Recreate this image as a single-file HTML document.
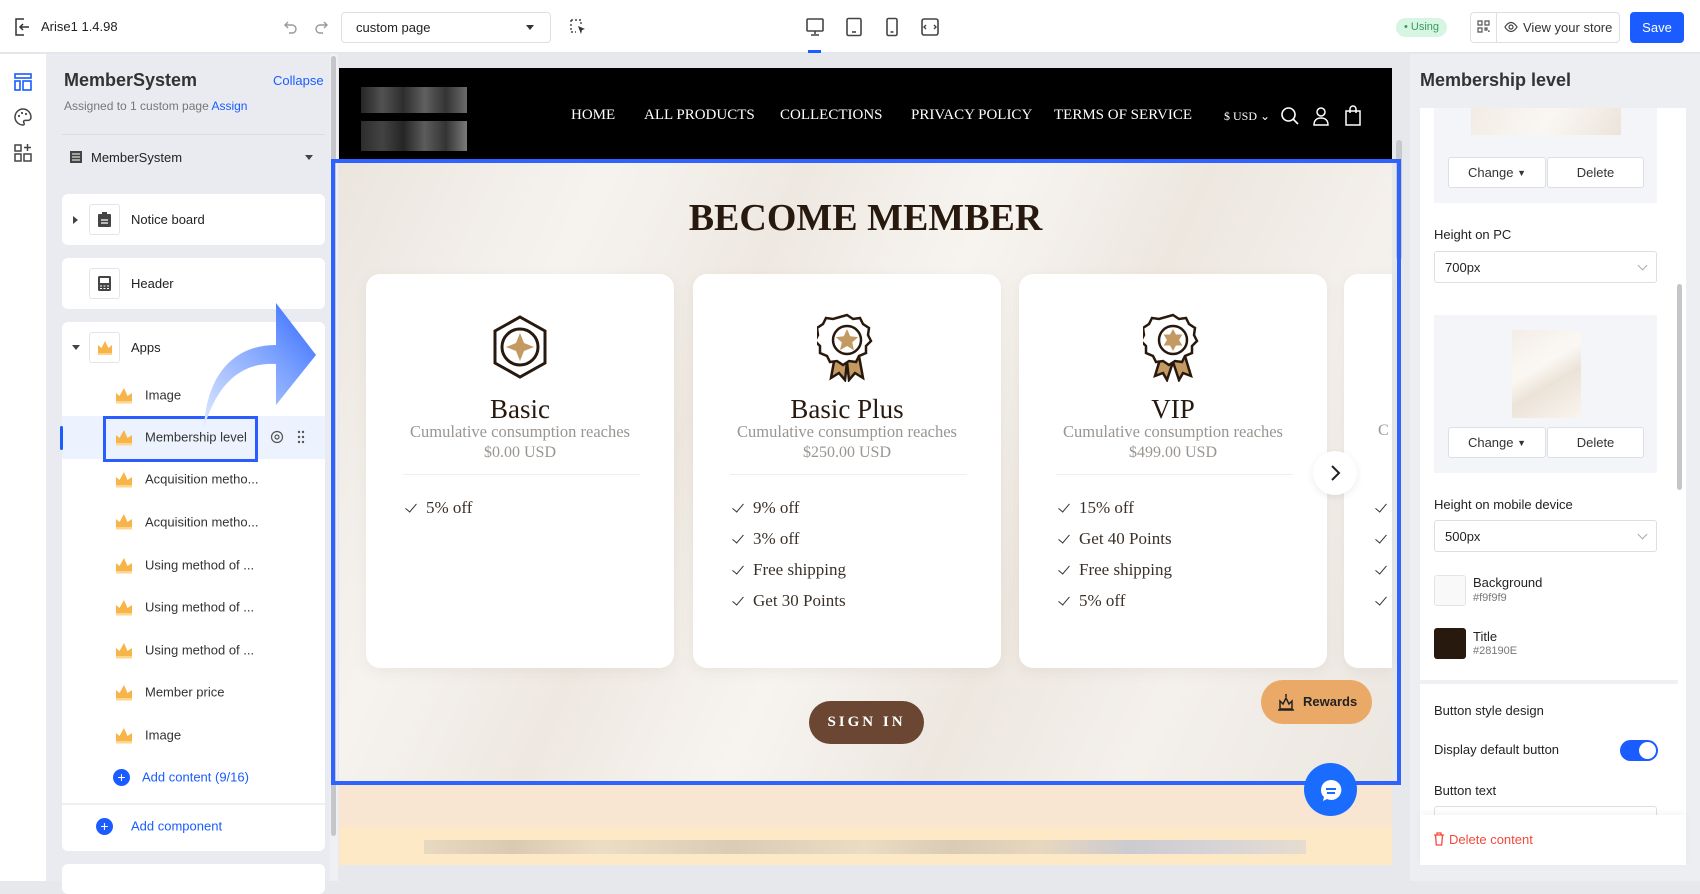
<!DOCTYPE html>
<html><head><meta charset="utf-8"><style>
*{box-sizing:border-box;margin:0;padding:0}
body{width:1700px;height:881px;overflow:hidden;position:relative;font-family:"Liberation Sans",sans-serif;background:#e6e8ec;color:#222}
.a{position:absolute}
.serif{font-family:"Liberation Serif",serif}
.top{left:0;top:0;width:1700px;height:53px;background:#fff;border-bottom:1px solid #e3e5e9}
.t13{font-size:13px}
.card{background:#fff;border-radius:6px}
.lbl{font-size:13px;color:#222}
.ch{position:absolute;left:115px;width:18px;height:18px}
.chtxt{position:absolute;left:145px;font-size:13px;color:#333;transform:translateY(-50%)}
.mc{position:absolute;top:274px;width:308px;height:394px;background:#fff;border-radius:14px;box-shadow:0 4px 14px rgba(120,100,80,.08)}
.mc .nm{position:absolute;top:120px;width:100%;text-align:center;font-size:27px;color:#28190e}
.mc .sb{position:absolute;top:148px;width:100%;text-align:center;font-size:16.5px;color:#9a9590}
.mc .pr{position:absolute;top:170px;width:100%;text-align:center;font-size:16px;color:#9a9590}
.mc .dv{position:absolute;top:200px;left:37px;right:34px;height:1px;background:#eee}
.mc ul{position:absolute;top:224px;left:40px;list-style:none}
.mc li{font-size:17px;color:#3b3129;height:31px;position:relative;padding-left:20px}
.mc li:before{content:"";position:absolute;left:2px;top:3px;width:5px;height:10px;border-right:1.5px solid #3b3129;border-bottom:1.5px solid #3b3129;transform:rotate(40deg)}
.btn2{position:absolute;height:31px;border:1px solid #dcdfe5;background:#fff;font-size:13px;color:#333;display:flex;align-items:center;justify-content:center;border-radius:3px}
.sel{position:absolute;left:1434px;width:223px;height:32px;border:1px solid #dcdfe5;border-radius:3px;background:#fff;font-size:13px;padding:8px 0 0 10px}
.sel:after{content:"";position:absolute;right:10px;top:10px;width:6px;height:6px;border-right:1px solid #aaa;border-bottom:1px solid #aaa;transform:rotate(45deg)}
</style></head><body>

<div class="a top"></div>
<svg class="a" style="left:14px;top:18px" width="16" height="18" viewBox="0 0 16 18"><path d="M10 1H2v16h8M6 9h9M9 6L6 9l3 3" fill="none" stroke="#333" stroke-width="1.5"/></svg>
<div class="a t13" style="left:41px;top:19px;color:#222">Arise1 1.4.98</div>
<svg class="a" style="left:283px;top:19px" width="16" height="16" viewBox="0 0 16 16"><path d="M5 3L2 6l3 3M2 6h7a4 4 0 010 8H6" fill="none" stroke="#999" stroke-width="1.4"/></svg>
<svg class="a" style="left:313px;top:19px" width="16" height="16" viewBox="0 0 16 16"><path d="M11 3l3 3-3 3M14 6H7a4 4 0 000 8h3" fill="none" stroke="#999" stroke-width="1.4"/></svg>
<div class="a" style="left:341px;top:12px;width:210px;height:31px;border:1px solid #dcdfe5;border-radius:4px;font-size:13px;padding:7px 14px">custom page<span style="position:absolute;right:16px;top:12px;border:4px solid transparent;border-top:5px solid #333"></span></div>
<svg class="a" style="left:569px;top:18px" width="18" height="18" viewBox="0 0 18 18"><path d="M2 2h10v5M2 2v12h5" fill="none" stroke="#444" stroke-width="1.4" stroke-dasharray="2 2"/><path d="M9 8l7 3-3 1-1 4z" fill="#333"/></svg>
<svg class="a" style="left:805px;top:17px" width="20" height="20" viewBox="0 0 20 20"><rect x="2" y="2" width="16" height="12" rx="1" fill="none" stroke="#444" stroke-width="1.6"/><path d="M10 14v3M6 18h8" stroke="#444" stroke-width="1.6"/></svg>
<div class="a" style="left:808px;top:50px;width:13px;height:3px;background:#1a5cff"></div>
<svg class="a" style="left:845px;top:17px" width="18" height="20" viewBox="0 0 18 20"><rect x="2" y="1.5" width="14" height="17" rx="1.5" fill="none" stroke="#444" stroke-width="1.6"/><path d="M7 15h4" stroke="#444" stroke-width="1.6"/></svg>
<svg class="a" style="left:885px;top:17px" width="14" height="20" viewBox="0 0 14 20"><rect x="2" y="1.5" width="10" height="17" rx="1.5" fill="none" stroke="#444" stroke-width="1.6"/><path d="M5.5 15h3" stroke="#444" stroke-width="1.6"/></svg>
<svg class="a" style="left:920px;top:17px" width="20" height="20" viewBox="0 0 20 20"><rect x="2" y="2" width="16" height="16" rx="2" fill="none" stroke="#444" stroke-width="1.6"/><path d="M6 8l-2 2 2 2M14 8l2 2-2 2" fill="none" stroke="#444" stroke-width="1.4"/></svg>
<div class="a" style="left:1396px;top:18px;width:51px;height:19px;border-radius:10px;background:#d6f5e2;color:#3a9a5e;font-size:11px;line-height:19px;text-align:center">• Using</div>
<div class="a" style="left:1470px;top:12px;width:150px;height:31px;border:1px solid #dcdfe5;border-radius:4px"></div>
<div class="a" style="left:1496px;top:12px;width:1px;height:31px;background:#dcdfe5"></div>
<svg class="a" style="left:1477px;top:20px" width="13" height="13" viewBox="0 0 13 13"><path d="M1 1h4v4H1zM8 1h4v4H8zM1 8h4v4H1zM8 8h2v2H8zM11 11h1v1" fill="none" stroke="#555" stroke-width="1.2"/></svg>
<svg class="a" style="left:1504px;top:20px" width="14" height="14" viewBox="0 0 14 14"><path d="M1 7s2.5-4.5 6-4.5S13 7 13 7s-2.5 4.5-6 4.5S1 7 1 7z" fill="none" stroke="#444" stroke-width="1.2"/><circle cx="7" cy="7" r="2" fill="none" stroke="#444" stroke-width="1.2"/></svg>
<div class="a t13" style="left:1523px;top:20px;color:#333">View your store</div>
<div class="a" style="left:1630px;top:12px;width:54px;height:31px;background:#1a5cff;border-radius:4px;color:#fff;font-size:13px;line-height:31px;text-align:center">Save</div>

<div class="a" style="left:0;top:54px;width:46px;height:827px;background:#fff"></div>
<svg class="a" style="left:13px;top:72px" width="20" height="20" viewBox="0 0 20 20"><rect x="2" y="2" width="16" height="4" fill="none" stroke="#1a5cff" stroke-width="1.6"/><rect x="2" y="9" width="5" height="9" fill="none" stroke="#1a5cff" stroke-width="1.6"/><rect x="10" y="9" width="8" height="9" fill="none" stroke="#1a5cff" stroke-width="1.6"/></svg>
<svg class="a" style="left:13px;top:107px" width="20" height="20" viewBox="0 0 20 20"><path d="M10 2a8 8 0 100 16c1.5 0 1.5-1.5.8-2.4-.7-.9 0-2.2 1.3-2.2H15a3 3 0 003-3c0-4.5-3.6-8.4-8-8.4z" fill="none" stroke="#444" stroke-width="1.5"/><circle cx="6" cy="9" r="1.1" fill="#444"/><circle cx="9" cy="6" r="1.1" fill="#444"/><circle cx="13" cy="7" r="1.1" fill="#444"/></svg>
<svg class="a" style="left:13px;top:143px" width="20" height="20" viewBox="0 0 20 20"><rect x="2" y="2" width="6" height="6" fill="none" stroke="#444" stroke-width="1.5"/><rect x="2" y="11" width="6" height="7" fill="none" stroke="#444" stroke-width="1.5"/><rect x="11" y="11" width="7" height="7" fill="none" stroke="#444" stroke-width="1.5"/><path d="M14.5 1v7M11 4.5h7" stroke="#444" stroke-width="1.5"/></svg>

<div class="a" style="left:46px;top:54px;width:284px;height:827px;background:#e9ebf0"></div>
<div class="a" style="left:330px;top:54px;width:8px;height:827px;background:#eef0f3"></div>
<div class="a" style="left:331px;top:56px;width:5px;height:780px;background:#c4c6ca;border-radius:3px"></div>
<div class="a" style="left:64px;top:70px;font-size:18px;font-weight:bold;color:#333">MemberSystem</div>
<div class="a" style="left:273px;top:73px;font-size:13px;color:#1a5cff">Collapse</div>
<div class="a" style="left:64px;top:99px;font-size:12px;color:#777">Assigned to 1 custom page <span style="color:#1a5cff">Assign</span></div>
<div class="a" style="left:62px;top:134px;width:263px;height:1px;background:#dadce1"></div>
<svg class="a" style="left:69px;top:150px" width="14" height="14" viewBox="0 0 14 14"><rect x="1" y="1" width="12" height="12" fill="#444"/><path d="M3 4h8M3 7h8M3 10h8" stroke="#fff" stroke-width="1"/></svg>
<div class="a lbl" style="left:91px;top:150px">MemberSystem</div>
<div class="a" style="left:305px;top:155px;border:4px solid transparent;border-top:5px solid #444"></div>

<div class="a card" style="left:62px;top:194px;width:263px;height:51px"></div>
<div class="a" style="left:73px;top:216px;border:4px solid transparent;border-left:5px solid #444"></div>
<div class="a" style="left:89px;top:204px;width:31px;height:31px;border:1px solid #e2e4e8;border-radius:3px"></div>
<svg class="a" style="left:97px;top:211px" width="15" height="17" viewBox="0 0 15 17"><rect x="1" y="3" width="13" height="13" rx="1" fill="#444"/><rect x="5" y="1" width="5" height="3" fill="#444"/><path d="M4 9h7M4 12h7" stroke="#fff" stroke-width="1.2"/></svg>
<div class="a lbl" style="left:131px;top:212px">Notice board</div>

<div class="a card" style="left:62px;top:258px;width:263px;height:51px"></div>
<div class="a" style="left:89px;top:268px;width:31px;height:31px;border:1px solid #e2e4e8;border-radius:3px"></div>
<svg class="a" style="left:97px;top:275px" width="15" height="17" viewBox="0 0 15 17"><rect x="1" y="1" width="13" height="15" rx="1.5" fill="#444"/><rect x="3" y="3" width="9" height="5" fill="#fff"/><path d="M3 11h2M6.5 11h2M10 11h2M3 13.5h2M6.5 13.5h2M10 13.5h2" stroke="#fff" stroke-width="1"/></svg>
<div class="a lbl" style="left:131px;top:276px">Header</div>

<div class="a card" style="left:62px;top:322px;width:263px;height:529px"></div>
<div class="a" style="left:72px;top:345px;border:4px solid transparent;border-top:5px solid #444"></div>
<div class="a" style="left:89px;top:332px;width:31px;height:31px;border:1px solid #e2e4e8;border-radius:3px"></div>
<svg class="a" style="left:96px;top:338px" width="18" height="18" viewBox="0 0 18 18"><path d="M2 7l3.5 3L9 3l3.5 7L16 7v8H2z" fill="#f7b44a"/><rect x="2" y="15" width="14" height="2" fill="#fbd38a"/></svg>
<div class="a lbl" style="left:131px;top:340px">Apps</div>
<div class="a" style="left:62px;top:416px;width:263px;height:43px;background:#edf3fe"></div>
<div class="a" style="left:60px;top:426px;width:3px;height:24px;background:#1a5cff;border-radius:2px"></div>

<svg width="0" height="0" style="position:absolute"><defs><g id="cr"><path d="M1 7l3.5 3L9 2l3.5 8L17 7v8H1z" fill="#f7b44a"/><rect x="1" y="15" width="16" height="2.5" fill="#fcd58e"/></g></defs></svg>
<svg class="ch" style="top:386px" viewBox="0 0 18 18"><use href="#cr"/></svg><div class="chtxt" style="top:395px">Image</div>
<svg class="ch" style="top:428px" viewBox="0 0 18 18"><use href="#cr"/></svg><div class="chtxt" style="top:437px">Membership level</div>
<svg class="ch" style="top:470px" viewBox="0 0 18 18"><use href="#cr"/></svg><div class="chtxt" style="top:479px">Acquisition metho...</div>
<svg class="ch" style="top:512px" viewBox="0 0 18 18"><use href="#cr"/></svg><div class="chtxt" style="top:522px">Acquisition metho...</div>
<svg class="ch" style="top:556px" viewBox="0 0 18 18"><use href="#cr"/></svg><div class="chtxt" style="top:565px">Using method of ...</div>
<svg class="ch" style="top:598px" viewBox="0 0 18 18"><use href="#cr"/></svg><div class="chtxt" style="top:607px">Using method of ...</div>
<svg class="ch" style="top:641px" viewBox="0 0 18 18"><use href="#cr"/></svg><div class="chtxt" style="top:650px">Using method of ...</div>
<svg class="ch" style="top:683px" viewBox="0 0 18 18"><use href="#cr"/></svg><div class="chtxt" style="top:692px">Member price</div>
<svg class="ch" style="top:726px" viewBox="0 0 18 18"><use href="#cr"/></svg><div class="chtxt" style="top:735px">Image</div>
<div class="a" style="left:113px;top:769px;width:17px;height:17px;border-radius:50%;background:#1a5cff;color:#fff;font-size:14px;line-height:16px;text-align:center">+</div>
<div class="chtxt" style="top:777px;left:142px;color:#1a5cff">Add content (9/16)</div>
<div class="a" style="left:62px;top:803px;width:263px;height:2px;background:#eef0f3"></div>
<div class="a" style="left:96px;top:818px;width:17px;height:17px;border-radius:50%;background:#1a5cff;color:#fff;font-size:14px;line-height:16px;text-align:center">+</div>
<div class="chtxt" style="top:826px;left:131px;color:#1a5cff">Add component</div>
<div class="a card" style="left:62px;top:864px;width:263px;height:30px"></div>
<svg class="a" style="left:270px;top:430px" width="14" height="14" viewBox="0 0 14 14"><circle cx="7" cy="7" r="5.5" fill="none" stroke="#555" stroke-width="1.2"/><circle cx="7" cy="7" r="2" fill="none" stroke="#555" stroke-width="1.2"/></svg>
<svg class="a" style="left:297px;top:430px" width="8" height="14" viewBox="0 0 8 14"><g fill="#555"><circle cx="2" cy="2" r="1.2"/><circle cx="6" cy="2" r="1.2"/><circle cx="2" cy="7" r="1.2"/><circle cx="6" cy="7" r="1.2"/><circle cx="2" cy="12" r="1.2"/><circle cx="6" cy="12" r="1.2"/></g></svg>
<div class="a" style="left:103px;top:416px;width:155px;height:46px;border:3.5px solid #2a5cff"></div>

<svg class="a" style="left:200px;top:300px" width="120" height="130" viewBox="0 0 120 130"><defs><linearGradient id="ag" x1="0" y1="1" x2="1" y2="0"><stop offset="0" stop-color="#dfe9ff"/><stop offset=".6" stop-color="#7ca2ff"/><stop offset="1" stop-color="#2f66ff"/></linearGradient></defs><path d="M4 128C6 80 30 45 76 45V3l40 52-40 50V64C44 62 18 80 4 128z" fill="url(#ag)"/></svg>

<div class="a" style="left:339px;top:68px;width:1053px;height:93px;background:#000"></div>
<div class="a" style="left:361px;top:87px;width:106px;height:26px;background:linear-gradient(90deg,#2a2a2a,#5a5a5a,#333,#6a6a6a,#3a3a3a,#777);opacity:.9"></div>
<div class="a" style="left:361px;top:121px;width:106px;height:30px;background:linear-gradient(90deg,#333,#4a4a4a,#2a2a2a,#666,#3a3a3a,#888);opacity:.9"></div>
<div class="a serif" style="left:571px;top:107px;font-size:15px;color:#fff">HOME</div>
<div class="a serif" style="left:644px;top:107px;font-size:15px;color:#fff">ALL PRODUCTS</div>
<div class="a serif" style="left:780px;top:107px;font-size:15px;color:#fff">COLLECTIONS</div>
<div class="a serif" style="left:911px;top:107px;font-size:15px;color:#fff">PRIVACY POLICY</div>
<div class="a serif" style="left:1054px;top:107px;font-size:15px;color:#fff">TERMS OF SERVICE</div>
<div class="a serif" style="left:1224px;top:109px;font-size:12px;color:#fff">$ USD ⌄</div>
<svg class="a" style="left:1280px;top:106px" width="20" height="20" viewBox="0 0 20 20"><circle cx="8.5" cy="8.5" r="6.5" fill="none" stroke="#fff" stroke-width="1.6"/><path d="M13 13l5 5" stroke="#fff" stroke-width="1.6"/></svg>
<svg class="a" style="left:1312px;top:106px" width="18" height="20" viewBox="0 0 18 20"><circle cx="9" cy="6" r="4" fill="none" stroke="#fff" stroke-width="1.5"/><path d="M2 19c0-5 3-7 7-7s7 2 7 7z" fill="none" stroke="#fff" stroke-width="1.5"/></svg>
<svg class="a" style="left:1344px;top:104px" width="18" height="22" viewBox="0 0 18 22"><rect x="2" y="7" width="14" height="14" fill="none" stroke="#fff" stroke-width="1.5"/><path d="M6 9V5a3 3 0 016 0v4" fill="none" stroke="#fff" stroke-width="1.5"/></svg>
<div class="a" style="left:1396px;top:140px;width:6px;height:120px;background:#c8c9cc;border-radius:3px"></div>

<div class="a" style="left:339px;top:163px;width:1053px;height:622px;background:linear-gradient(115deg,#ebe5de 0%,#f6f3ef 20%,#eee8e1 35%,#f7f4f0 50%,#ede7e0 65%,#f4f0eb 80%,#ebe6e0 100%)"></div>
<div class="a serif" style="left:339px;top:196px;width:1053px;text-align:center;font-size:38px;font-weight:bold;color:#28190e">BECOME MEMBER</div>

<div class="mc serif" style="left:366px">
 <svg class="a" style="left:124px;top:40px" width="60" height="66" viewBox="0 0 60 66"><path d="M30 3l25 14v32L30 63 5 49V17z" fill="none" stroke="#28190e" stroke-width="3"/><circle cx="30" cy="33" r="18" fill="none" stroke="#28190e" stroke-width="3"/><path d="M30 19l4 10 10 4-10 4-4 10-4-10-10-4 10-4z" fill="#c49a63"/></svg>
 <div class="nm">Basic</div><div class="sb">Cumulative consumption reaches</div><div class="pr">$0.00 USD</div><div class="dv"></div>
 <ul><li>5% off</li></ul></div>
<div class="mc serif" style="left:693px">
 <svg class="a" style="left:124px;top:38px" width="60" height="70" viewBox="0 0 60 70"><path d="M18 44l-4 22 8-5 6 7 2-18M42 44l4 22-8-5-6 7-2-18" fill="#c49a63" stroke="#28190e" stroke-width="2.5"/><path d="M30 3l6 4 7-1 3 6 6 4-1 7 3 6-5 5v7l-7 3-3 6-7-1-6 4-6-4-7 1-3-6-7-3v-7l-5-5 3-6-1-7 6-4 3-6 7 1z" fill="#fff" stroke="#28190e" stroke-width="2.5"/><circle cx="30" cy="28" r="14" fill="none" stroke="#28190e" stroke-width="2.5"/><path d="M30 17l3.2 7.3 8 .8-6 5.3 1.8 7.8L30 34l-7 4.2 1.8-7.8-6-5.3 8-.8z" fill="#c49a63"/></svg>
 <div class="nm">Basic Plus</div><div class="sb">Cumulative consumption reaches</div><div class="pr">$250.00 USD</div><div class="dv"></div>
 <ul><li>9% off</li><li>3% off</li><li>Free shipping</li><li>Get 30 Points</li></ul></div>
<div class="mc serif" style="left:1019px">
 <svg class="a" style="left:124px;top:38px" width="60" height="70" viewBox="0 0 60 70"><path d="M18 44l-6 20 8-3 4 7 6-18M42 44l6 20-8-3-4 7-6-18" fill="#c49a63" stroke="#28190e" stroke-width="2.5"/><path d="M30 3l6 4 7-1 3 6 6 4-1 7 3 6-5 5v7l-7 3-3 6-7-1-6 4-6-4-7 1-3-6-7-3v-7l-5-5 3-6-1-7 6-4 3-6 7 1z" fill="#fff" stroke="#28190e" stroke-width="2.5"/><circle cx="30" cy="28" r="14" fill="none" stroke="#28190e" stroke-width="2.5"/><path d="M30 17l3 5.5h6.3l-3.2 5.5 3.2 5.5H33L30 39l-3-5.5h-6.3l3.2-5.5-3.2-5.5H27z" fill="#c49a63"/></svg>
 <div class="nm">VIP</div><div class="sb">Cumulative consumption reaches</div><div class="pr">$499.00 USD</div><div class="dv"></div>
 <ul><li>15% off</li><li>Get 40 Points</li><li>Free shipping</li><li>5% off</li></ul></div>
<div class="mc serif" style="left:1344px;width:48px;border-radius:14px 0 0 14px;overflow:hidden">
 <div class="a" style="left:34px;top:148px;font-size:16px;color:#9a9590">C</div>
 <ul style="left:32px"><li></li><li></li><li></li><li></li></ul></div>
<div class="a" style="left:1313px;top:451px;width:44px;height:44px;border-radius:50%;background:#fff;box-shadow:0 2px 8px rgba(0,0,0,.08)"></div>
<svg class="a" style="left:1328px;top:463px" width="14" height="20" viewBox="0 0 14 20"><path d="M4 3l7 7-7 7" fill="none" stroke="#222" stroke-width="2"/></svg>

<div class="a serif" style="left:809px;top:701px;width:115px;height:43px;border-radius:22px;background:#6b4632;color:#fff;font-size:15px;letter-spacing:3px;text-align:center;line-height:43px;font-weight:bold">SIGN IN</div>
<div class="a" style="left:1261px;top:680px;width:111px;height:44px;border-radius:22px;background:#eaa967"></div>
<svg class="a" style="left:1277px;top:692px" width="18" height="20" viewBox="0 0 18 20"><path d="M3 17V9l3 3 3-6 3 6 3-3v8z" fill="none" stroke="#222" stroke-width="1.5"/><path d="M1 18h16M9 2v3" stroke="#222" stroke-width="1.5"/></svg>
<div class="a" style="left:1303px;top:694px;font-size:13px;font-weight:bold;color:#222">Rewards</div>

<div class="a" style="left:339px;top:785px;width:1053px;height:80px;background:#f8e6d3"></div>
<div class="a" style="left:339px;top:827px;width:1053px;height:38px;background:#fde9c6"></div>
<div class="a" style="left:424px;top:840px;width:882px;height:14px;background:linear-gradient(90deg,#e8d8c0,#d7c8b0 10%,#ebdcc4 20%,#d9cab4 35%,#eadbc3 50%,#d8c9b3 60%,#e6d6be 70%,#c9c9d0 80%,#d5d3d8 90%,#e5dcd0);opacity:.95"></div>

<div class="a" style="left:331px;top:159px;width:1070px;height:626px;border:4px solid #2f63ff"></div>
<div class="a" style="left:1304px;top:763px;width:53px;height:53px;border-radius:50%;background:#1a6cff"></div>
<svg class="a" style="left:1318px;top:777px" width="26" height="26" viewBox="0 0 26 26"><path d="M13 3a10 10 0 00-10 10c0 3 1 5 3 7l-1 4 4-2a10 10 0 104-19z" fill="#fff"/><path d="M8 12h10M9 16h8" stroke="#1a6cff" stroke-width="2"/></svg>

<div class="a" style="left:1410px;top:54px;width:290px;height:827px;background:#eceef2"></div>
<div class="a" style="left:1420px;top:70px;font-size:18px;font-weight:bold;color:#333">Membership level</div>
<div class="a" style="left:1420px;top:108px;width:266px;height:757px;background:#fff"></div>
<div class="a" style="left:1434px;top:108px;width:223px;height:95px;background:#f4f5f8"></div>
<div class="a" style="left:1471px;top:108px;width:150px;height:27px;background:linear-gradient(120deg,#f1ebe3,#faf7f3,#ece4da)"></div>
<div class="btn2" style="left:1448px;top:157px;width:98px">Change&nbsp;<span style="font-size:9px">▼</span></div>
<div class="btn2" style="left:1547px;top:157px;width:97px">Delete</div>
<div class="a lbl" style="left:1434px;top:227px">Height on PC</div>
<div class="sel" style="top:251px">700px</div>
<div class="a" style="left:1434px;top:315px;width:223px;height:158px;background:#f4f5f8"></div>
<div class="a" style="left:1512px;top:330px;width:69px;height:88px;background:linear-gradient(150deg,#f3ede5,#fbf8f4 40%,#ece3d8 60%,#f8f4ef)"></div>
<div class="btn2" style="left:1448px;top:427px;width:98px">Change&nbsp;<span style="font-size:9px">▼</span></div>
<div class="btn2" style="left:1547px;top:427px;width:97px">Delete</div>
<div class="a lbl" style="left:1434px;top:497px">Height on mobile device</div>
<div class="sel" style="top:520px">500px</div>
<div class="a" style="left:1434px;top:575px;width:32px;height:31px;border:1px solid #e2e4e8;border-radius:3px;background:#f9f9f9"></div>
<div class="a lbl" style="left:1473px;top:575px">Background</div>
<div class="a" style="left:1473px;top:592px;font-size:11px;color:#777">#f9f9f9</div>
<div class="a" style="left:1434px;top:628px;width:32px;height:31px;border-radius:3px;background:#28190e"></div>
<div class="a lbl" style="left:1473px;top:629px">Title</div>
<div class="a" style="left:1473px;top:645px;font-size:11px;color:#777">#28190E</div>
<div class="a" style="left:1420px;top:680px;width:258px;height:4px;background:#eef0f4"></div>
<div class="a lbl" style="left:1434px;top:703px">Button style design</div>
<div class="a lbl" style="left:1434px;top:742px">Display default button</div>
<div class="a" style="left:1620px;top:740px;width:38px;height:21px;border-radius:11px;background:#1a5cff"></div>
<div class="a" style="left:1639px;top:742px;width:17px;height:17px;border-radius:50%;background:#fff"></div>
<div class="a lbl" style="left:1434px;top:783px">Button text</div>
<div class="a" style="left:1434px;top:806px;width:223px;height:15px;border:1px solid #dcdfe5;border-bottom:none;border-radius:3px 3px 0 0"></div>
<div class="a" style="left:1420px;top:815px;width:266px;height:50px;background:#fff;box-shadow:0 -3px 6px rgba(0,0,0,.04)"></div>
<svg class="a" style="left:1433px;top:832px" width="12" height="14" viewBox="0 0 12 14"><path d="M1 3h10M4 3V1h4v2M2.5 3l.8 10h5.4l.8-10" fill="none" stroke="#f5483b" stroke-width="1.3"/></svg>
<div class="a" style="left:1449px;top:832px;font-size:13px;color:#f5483b">Delete content</div>
<div class="a" style="left:1677px;top:284px;width:5px;height:206px;background:#c4c6ca;border-radius:3px"></div>
</body></html>
